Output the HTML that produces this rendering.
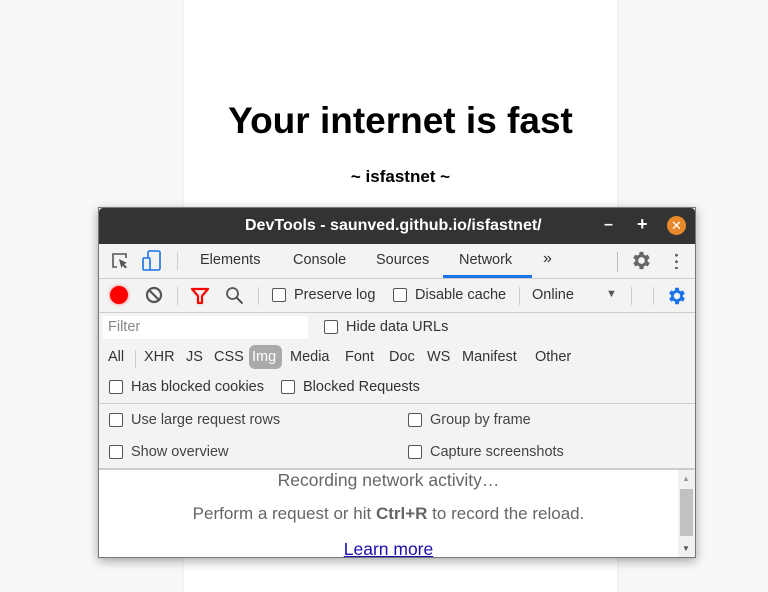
<!DOCTYPE html>
<html><head><style>
*{margin:0;padding:0;box-sizing:border-box}
body{width:768px;height:592px;background:#f8f8f8;position:relative;overflow:hidden;font-family:"Liberation Sans","DejaVu Sans",sans-serif}
.page{position:absolute;left:184px;top:0;width:433px;height:592px;background:#fff;box-shadow:0 0 3px rgba(0,0,0,.08)}
.h1{position:absolute;left:0;width:433px;top:100px;text-align:center;font-size:37px;font-weight:bold;color:#000}
.h2{position:absolute;left:0;width:433px;top:167px;text-align:center;font-size:17px;font-weight:bold;color:#000}
.dt{position:absolute;left:98px;top:207px;width:598px;height:351px;background:#f3f3f3;border:1px solid #777;box-shadow:0 3px 10px rgba(0,0,0,.35);color:#333;font-size:14.5px;overflow:hidden}
.tb{position:absolute;left:0;top:0;width:100%;height:36px;background:#333;color:#fff;font-weight:bold;font-size:16px;border-radius:4px 4px 0 0}
.a{position:absolute;white-space:nowrap}
.line{position:absolute;left:0;width:100%;height:1px;background:#ccc}
.vs{position:absolute;width:1px;background:#ccc}
.cb{position:absolute;width:14px;height:14px;border:1px solid #555;border-radius:2px;background:#fff}
.msg{position:absolute;left:0;width:579px;text-align:center;color:#666;font-size:17px;white-space:nowrap}
</style></head><body>
<div class="page"><div class="h1">Your internet is fast</div><div class="h2">~ isfastnet ~</div></div>
<div class="dt">
 <div class="tb">
  <div class="a" style="left:146px;top:9px">DevTools - saunved.github.io/isfastnet/</div>
  <div class="a" style="left:505px;top:8px;font-size:16px">–</div>
  <div class="a" style="left:538px;top:6px;font-size:18px">+</div>
  <div class="a" style="left:568px;top:8px;width:19px;height:19px;border-radius:50%;background:#e88a2c;text-align:center;font-size:13px;line-height:19px">✕</div>
 </div>
 <svg class="a" style="left:11px;top:43px" width="20" height="20" viewBox="0 0 20 20"><path d="M7 16H3V3h13v4" fill="none" stroke="#555" stroke-width="1.6"/><path d="M9 8l8 4-3 1 3 3-1.5 1.5-3-3-1 3z" fill="#555"/></svg>
 <svg class="a" style="left:43px;top:42px" width="20" height="22" viewBox="0 0 20 22"><rect x="6" y="1" width="12" height="19" rx="1.5" fill="none" stroke="#1a73e8" stroke-width="1.6"/><rect x="1" y="8" width="7" height="12" rx="1" fill="#f3f3f3" stroke="#1a73e8" stroke-width="1.6"/></svg>
 <div class="vs" style="left:78px;top:44px;height:18px"></div>
 <div class="a" style="left:101px;top:44px">Elements</div>
 <div class="a" style="left:194px;top:44px">Console</div>
 <div class="a" style="left:277px;top:44px">Sources</div>
 <div class="a" style="left:360px;top:44px">Network</div>
 <div class="a" style="left:344px;top:67px;width:89px;height:3px;background:#1a73e8"></div>
 <div class="a" style="left:444px;top:42px;font-size:16px">»</div>
 <div class="vs" style="left:518px;top:44px;height:20px;background:#bbb"></div>
 <svg class="a" style="left:531px;top:41px" width="23" height="23" viewBox="0 0 24 24"><path fill="#666" fill-rule="evenodd" d="M19.4 13a7.5 7.5 0 000-2l2.1-1.6-2-3.5-2.5 1a7 7 0 00-1.7-1L15 3h-4l-.4 2.9a7 7 0 00-1.7 1l-2.5-1-2 3.5L6.6 11a7.5 7.5 0 000 2l-2.1 1.6 2 3.5 2.5-1a7 7 0 001.7 1L11 21h4l.4-2.9a7 7 0 001.7-1l2.5 1 2-3.5zM13 15.5a3.5 3.5 0 110-7 3.5 3.5 0 010 7z" transform="translate(-1 0)"/></svg>
 <div class="a" style="left:576px;top:44px;width:3px;height:17px;background:radial-gradient(circle,#666 1.4px,transparent 1.6px) 0 0/3px 6.5px"></div>
 <div class="line" style="top:70px"></div>
 <div class="a" style="left:11px;top:78px;width:18px;height:18px;border-radius:50%;background:#f00;box-shadow:0 0 3px #f66"></div>
 <svg class="a" style="left:46px;top:78px" width="18" height="18" viewBox="0 0 18 18"><circle cx="9" cy="9" r="7" fill="none" stroke="#555" stroke-width="2.2"/><path d="M4 4l10 10" stroke="#555" stroke-width="2.2"/></svg>
 <div class="vs" style="left:78px;top:79px;height:18px"></div>
 <svg class="a" style="left:91px;top:79px" width="20" height="18" viewBox="0 0 20 18"><path d="M2 2h16l-6 7v7h-4V9z" fill="none" stroke="#f00" stroke-width="2.2" stroke-linejoin="round"/></svg>
 <svg class="a" style="left:126px;top:78px" width="19" height="19" viewBox="0 0 19 19"><circle cx="7.5" cy="7.5" r="5.5" fill="none" stroke="#555" stroke-width="1.8"/><path d="M11.5 11.5l6 6" stroke="#555" stroke-width="2"/></svg>
 <div class="vs" style="left:159px;top:79px;height:18px"></div>
 <div class="cb" style="left:173px;top:80px"></div><div class="a" style="left:195px;top:79px">Preserve log</div>
 <div class="cb" style="left:294px;top:80px"></div><div class="a" style="left:316px;top:79px">Disable cache</div>
 <div class="vs" style="left:420px;top:79px;height:18px"></div>
 <div class="a" style="left:433px;top:79px">Online</div>
 <div class="a" style="left:507px;top:80px;font-size:11px;color:#555">▼</div>
 <div class="vs" style="left:532px;top:79px;height:18px"></div>
 <div class="vs" style="left:554px;top:79px;height:18px"></div>
 <svg class="a" style="left:567px;top:77px" width="22" height="22" viewBox="0 0 24 24"><path fill="#1a73e8" fill-rule="evenodd" d="M19.4 13a7.5 7.5 0 000-2l2.1-1.6-2-3.5-2.5 1a7 7 0 00-1.7-1L15 3h-4l-.4 2.9a7 7 0 00-1.7 1l-2.5-1-2 3.5L6.6 11a7.5 7.5 0 000 2l-2.1 1.6 2 3.5 2.5-1a7 7 0 001.7 1L11 21h4l.4-2.9a7 7 0 001.7-1l2.5 1 2-3.5zM13 15.5a3.5 3.5 0 110-7 3.5 3.5 0 010 7z" transform="translate(-1 0)"/></svg>
 <div class="line" style="top:104px"></div>
 <div class="a" style="left:4px;top:108px;width:205px;height:23px;background:#fff"></div>
 <div class="a" style="left:9px;top:111px;color:#888">Filter</div>
 <div class="cb" style="left:225px;top:112px"></div><div class="a" style="left:247px;top:111px">Hide data URLs</div>
 <div class="a" style="left:9px;top:141px">All</div>
 <div class="vs" style="left:36px;top:142px;height:18px"></div>
 <div class="a" style="left:45px;top:141px">XHR</div>
 <div class="a" style="left:87px;top:141px">JS</div>
 <div class="a" style="left:115px;top:141px">CSS</div>
 <div class="a" style="left:150px;top:137px;width:33px;height:24px;border-radius:6px;background:#aaa"></div>
 <div class="a" style="left:153px;top:141px;color:#fff">Img</div>
 <div class="a" style="left:191px;top:141px">Media</div>
 <div class="a" style="left:246px;top:141px">Font</div>
 <div class="a" style="left:290px;top:141px">Doc</div>
 <div class="a" style="left:328px;top:141px">WS</div>
 <div class="a" style="left:363px;top:141px">Manifest</div>
 <div class="a" style="left:436px;top:141px">Other</div>
 <div class="cb" style="left:10px;top:172px"></div><div class="a" style="left:32px;top:171px">Has blocked cookies</div>
 <div class="cb" style="left:182px;top:172px"></div><div class="a" style="left:204px;top:171px">Blocked Requests</div>
 <div class="line" style="top:195px"></div>
 <div class="cb" style="left:10px;top:205px"></div><div class="a" style="left:32px;top:204px;color:#444">Use large request rows</div>
 <div class="cb" style="left:309px;top:205px"></div><div class="a" style="left:331px;top:204px;color:#444">Group by frame</div>
 <div class="cb" style="left:10px;top:237px"></div><div class="a" style="left:32px;top:236px;color:#444">Show overview</div>
 <div class="cb" style="left:309px;top:237px"></div><div class="a" style="left:331px;top:236px;color:#444">Capture screenshots</div>
 <div class="a" style="left:0;top:260px;width:100%;height:2px;background:#ccc"></div>
 <div class="a" style="left:0;top:262px;width:100%;height:89px;background:#fff"></div>
 <div class="msg" style="top:262px;font-size:17.5px">Recording network activity…</div>
 <div class="msg" style="top:296px">Perform a request or hit <b>Ctrl+R</b> to record the reload.</div>
 <div class="msg" style="top:331px;color:#1a0dab;text-decoration:underline;font-size:17.5px">Learn more</div>
 <div class="a" style="left:579px;top:262px;width:17px;height:89px;background:#f1f1f1"></div>
 <div class="a" style="left:581px;top:281px;width:13px;height:47px;background:#c1c1c1"></div>
 <div class="a" style="left:583px;top:266px;font-size:8px;color:#999">▲</div>
 <div class="a" style="left:583px;top:336px;font-size:8px;color:#555">▼</div>
</div>
</body></html>
